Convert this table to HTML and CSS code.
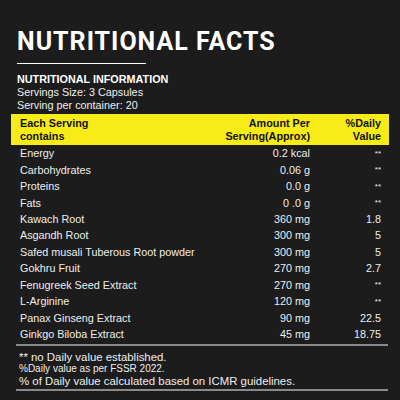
FILE: index.html
```html
<!DOCTYPE html>
<html lang="en">
<head>
  <meta charset="UTF-8" />
  <meta name="viewport" content="width=device-width, initial-scale=1.0"/>
  <title>Nutritional Facts</title>
  <link rel="stylesheet" href="styles.css">
</head>
<body>
  <div class="panel">
    <h1 class="title">NUTRITIONAL FACTS</h1>
    <div class="rule"></div>

    <div class="info">
      <div class="info-head">NUTRITIONAL INFORMATION</div>
      <div>Servings Size: 3 Capsules</div>
      <div>Serving per container: 20</div>
    </div>

    <table class="facts">
      <thead>
        <tr>
          <th class="name">Each Serving<br>contains</th>
          <th class="amount">Amount Per<br>Serving(Approx)</th>
          <th class="daily">%Daily<br>Value</th>
        </tr>
      </thead>
      <tbody>
        <tr><td class="name">Energy</td><td class="amount">0.2 kcal</td><td class="daily stars">**</td></tr>
        <tr><td class="name">Carbohydrates</td><td class="amount">0.06 g</td><td class="daily stars">**</td></tr>
        <tr><td class="name">Proteins</td><td class="amount">0.0 g</td><td class="daily stars">**</td></tr>
        <tr><td class="name">Fats</td><td class="amount">0 .0 g</td><td class="daily stars">**</td></tr>
        <tr><td class="name">Kawach Root</td><td class="amount">360 mg</td><td class="daily">1.8</td></tr>
        <tr><td class="name">Asgandh Root</td><td class="amount">300 mg</td><td class="daily">5</td></tr>
        <tr><td class="name">Safed musali Tuberous Root powder</td><td class="amount">300 mg</td><td class="daily">5</td></tr>
        <tr><td class="name">Gokhru Fruit</td><td class="amount">270 mg</td><td class="daily">2.7</td></tr>
        <tr><td class="name">Fenugreek Seed Extract</td><td class="amount">270 mg</td><td class="daily stars">**</td></tr>
        <tr><td class="name">L-Arginine</td><td class="amount">120 mg</td><td class="daily stars">**</td></tr>
        <tr><td class="name">Panax Ginseng Extract</td><td class="amount">90 mg</td><td class="daily">22.5</td></tr>
        <tr><td class="name">Ginkgo Biloba Extract</td><td class="amount">45 mg</td><td class="daily">18.75</td></tr>
      </tbody>
    </table>
    <div class="divider"></div>

    <div class="notes">
      <div>** no Daily value established.</div>
      <div class="small">%Daily value as per FSSR 2022.</div>
      <div>% of Daily value calculated based on ICMR guidelines.</div>
    </div>
    <div class="divider"></div>
  </div>
</body>
</html>
```

FILE: styles.css
```css
body {
  margin: 0;
  background: #1c1c1c;
  color: #fff;
  font-family: 'Liberation Sans', Arial, sans-serif;
}

.panel {
  width: 400px;
  height: 400px;
  padding: 28px 11px 0 11px;
  box-sizing: border-box;
}

.title {
  margin: 0 0 0 6px;
  font-family: Roboto, 'Liberation Sans', sans-serif;
  font-weight: 700;
  font-size: 25px;
  line-height: 28px;
  letter-spacing: 1px;
}

.rule {
  width: 129px;
  height: 1px;
  background: #fff;
  margin: 7px 0 0 6px;
}

.info {
  margin: 9px 0 0 6px;
  font-size: 10.8px;
  line-height: 13px;
  color: #eee;
}

.info-head {
  font-weight: 700;
  color: #fff;
}

/* Table */
.facts {
  width: 378px;
  margin-top: 2px;
  border-collapse: collapse;
  font-size: 10.8px;
  white-space: nowrap;
}

.facts thead th {
  background: #f7ec17;
  color: #111;
  font-weight: 700;
  line-height: 12.5px;
  padding: 3px 0 3px 0;
}

.facts td {
  padding: 0;
  height: 16.45px;
  color: #eee;
}

.facts tbody tr:last-child td {
  padding-bottom: 2px;
}

.name {
  text-align: left;
  padding-left: 9px !important;
}

.amount {
  text-align: right;
  width: 100px;
}

.daily {
  text-align: right;
  width: 71px;
  padding-right: 8px !important;
}

.stars {
  font-size: 8px;
}

.divider {
  width: 372px;
  height: 2px;
  margin-left: 5px;
  background: #8a8a8a;
}

/* Footnotes */
.notes {
  margin-left: 8px;
  padding: 5px 0 2px 0;
  font-size: 11.4px;
  line-height: 12px;
  color: #eee;
}

.notes .small {
  font-size: 10px;
}
```
